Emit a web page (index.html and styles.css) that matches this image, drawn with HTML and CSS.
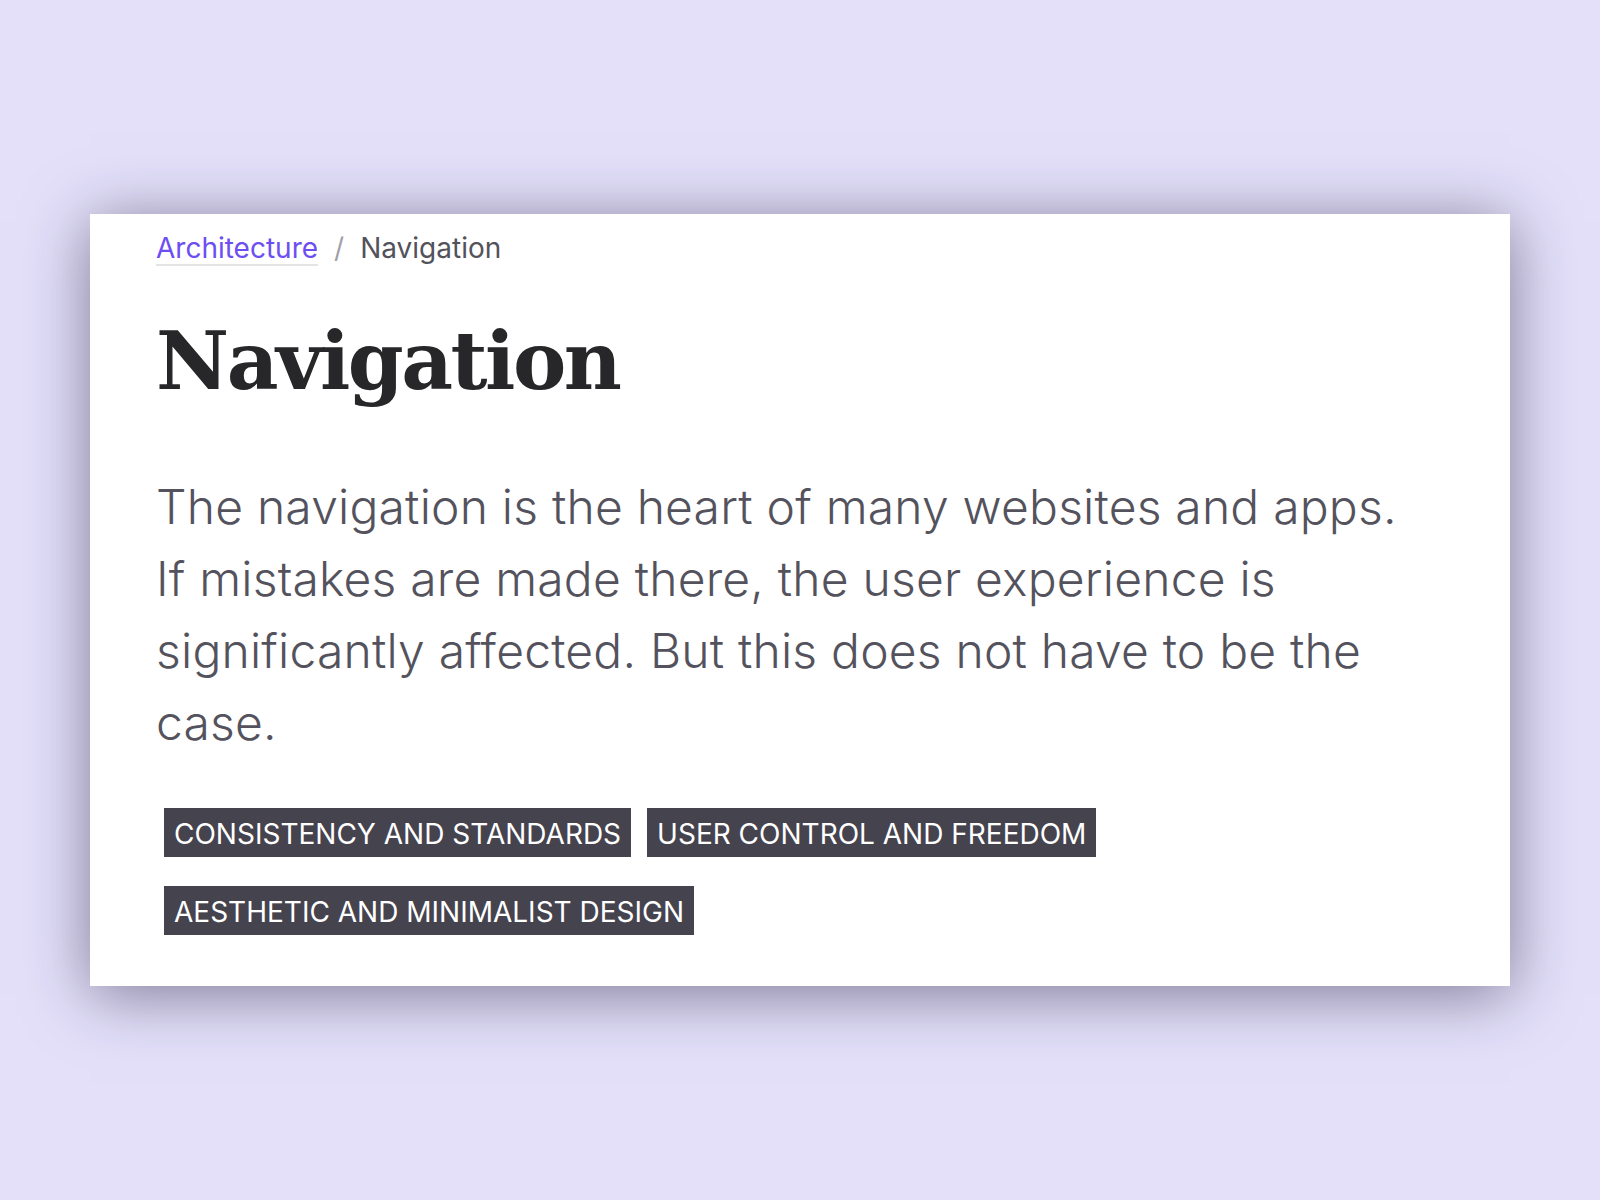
FILE: index.html
```html
<!DOCTYPE html>
<html lang="en">
<head>
<meta charset="utf-8">
<title>Navigation</title>
<link rel="stylesheet" href="styles.css">
</head>
<body>
<main class="stage">
  <article class="card">
    <nav class="crumbs">
      <a class="crumb-link" href="#">Architecture</a>
      <span class="crumb-sep">/</span>
      <span class="crumb-current">Navigation</span>
    </nav>
    <h1 class="title">Navigation</h1>
    <p class="lead">The navigation is the heart of many websites and apps. If mistakes are made there, the user experience is significantly affected. But this does not have to be the case.</p>
    <ul class="tags">
      <li class="tag">Consistency and standards</li>
      <li class="tag">User control and freedom</li>
      <li class="tag">Aesthetic and minimalist design</li>
    </ul>
  </article>
</main>
</body>
</html>
```
FILE: styles.css
```css
* { box-sizing: border-box; }
html, body { margin: 0; padding: 0; }
body {
  background: #e4e0fa;
  font-family: Inter, "Noto Sans", sans-serif;
}
.stage {
  min-height: 1200px;
  display: flex;
  align-items: center;
  justify-content: center;
}
.card {
  width: 1420px;
  height: 772px;
  background: #ffffff;
  padding: 14px 66px 49px;
  box-shadow: 0 8px 60px 0 rgba(25, 20, 50, 0.5);
}
.crumbs {
  display: flex;
  align-items: center;
  gap: 16px;
  font-size: 28px;
  line-height: 40px;
  height: 40px;
}
.crumb-link {
  color: #6c4ef2;
  text-decoration: none;
  border-bottom: 2px solid #e4e4e7;
  line-height: 32px;
  padding-top: 2px;
}
.crumb-sep { color: #a1a1aa; }
.crumb-current { color: #52525b; }
.title {
  margin: 41px 0 0;
  font-family: "DejaVu Serif", "Liberation Serif", serif;
  font-weight: 700;
  font-size: 80px;
  line-height: 104px;
  letter-spacing: -2.5px;
  color: #27272a;
}
.lead {
  margin: 58px 0 0;
  max-width: 1270px;
  font-size: 48px;
  line-height: 72px;
  font-weight: 300;
  letter-spacing: 0.2px;
  color: #54535d;
}
.tags {
  list-style: none;
  margin: 49px 0 0 8px;
  padding: 0;
  display: flex;
  flex-wrap: wrap;
  gap: 29px 16px;
}
.tag {
  background: #45434e;
  color: #ffffff;
  text-transform: uppercase;
  font-size: 28px;
  line-height: 46px;
  height: 49px;
  padding: 3px 10px 0;
}
```
